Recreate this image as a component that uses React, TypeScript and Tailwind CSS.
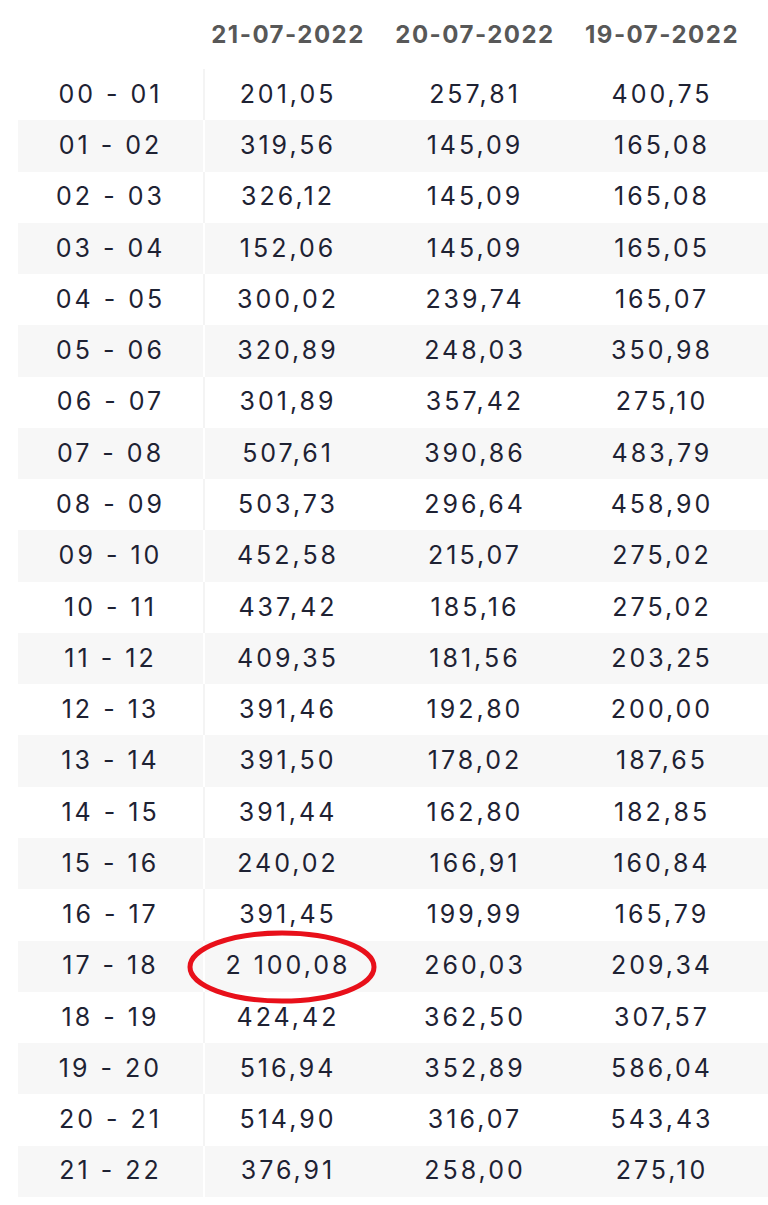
import React from "react";

const dates = ["21-07-2022", "20-07-2022", "19-07-2022"];

const rows: [string, string, string, string][] = [
  ["00 - 01", "201,05", "257,81", "400,75"],
  ["01 - 02", "319,56", "145,09", "165,08"],
  ["02 - 03", "326,12", "145,09", "165,08"],
  ["03 - 04", "152,06", "145,09", "165,05"],
  ["04 - 05", "300,02", "239,74", "165,07"],
  ["05 - 06", "320,89", "248,03", "350,98"],
  ["06 - 07", "301,89", "357,42", "275,10"],
  ["07 - 08", "507,61", "390,86", "483,79"],
  ["08 - 09", "503,73", "296,64", "458,90"],
  ["09 - 10", "452,58", "215,07", "275,02"],
  ["10 - 11", "437,42", "185,16", "275,02"],
  ["11 - 12", "409,35", "181,56", "203,25"],
  ["12 - 13", "391,46", "192,80", "200,00"],
  ["13 - 14", "391,50", "178,02", "187,65"],
  ["14 - 15", "391,44", "162,80", "182,85"],
  ["15 - 16", "240,02", "166,91", "160,84"],
  ["16 - 17", "391,45", "199,99", "165,79"],
  ["17 - 18", "2 100,08", "260,03", "209,34"],
  ["18 - 19", "424,42", "362,50", "307,57"],
  ["19 - 20", "516,94", "352,89", "586,04"],
  ["20 - 21", "514,90", "316,07", "543,43"],
  ["21 - 22", "376,91", "258,00", "275,10"],
];

// red hand-drawn style ring over the spike value
const HighlightRing = () => (
  <svg
    className="absolute left-[-21px] top-[-14px] pointer-events-none"
    width="196"
    height="80"
    viewBox="0 0 196 80"
  >
    <ellipse cx="98" cy="40" rx="92" ry="34" fill="none" stroke="#e8101a" strokeWidth="5" />
  </svg>
);

export default function App() {
  return (
    <div
      className="w-[768px] h-[1205px] bg-white text-[#1e2233]"
      style={{ fontFamily: "Inter, 'Liberation Sans', sans-serif" }}
    >
      {/* header */}
      <div className="flex h-[69px] items-center pl-[18px] text-[24px] font-bold text-[#585858] tracking-[1.5px]">
        <div className="w-[187px]" />
        <div className="w-[166px] text-center">{dates[0]}</div>
        <div className="w-[208px] text-center">{dates[1]}</div>
        <div className="w-[166px] text-center">{dates[2]}</div>
      </div>

      {/* body */}
      <div className="pl-[18px] tracking-[3px]">
        {rows.map((r, i) => {
          const odd = i % 2 === 1;
          return (
            <div
              key={r[0]}
              className={`flex h-[51.27px] items-center text-[25px] ${odd ? "bg-[#f7f7f7]" : "bg-white"}`}
            >
              <div
                className={`w-[187px] h-full flex items-center justify-center border-r-2 ${
                  odd ? "border-white" : "border-[#f4f4f4]"
                }`}
              >
                {r[0]}
              </div>
              <div className="relative w-[166px] h-full flex items-center justify-center">
                {r[1]}
                {i === 17 && <HighlightRing />}
              </div>
              <div className="w-[208px] text-center">{r[2]}</div>
              <div className="w-[166px] text-center">{r[3]}</div>
            </div>
          );
        })}
      </div>
    </div>
  );
}
